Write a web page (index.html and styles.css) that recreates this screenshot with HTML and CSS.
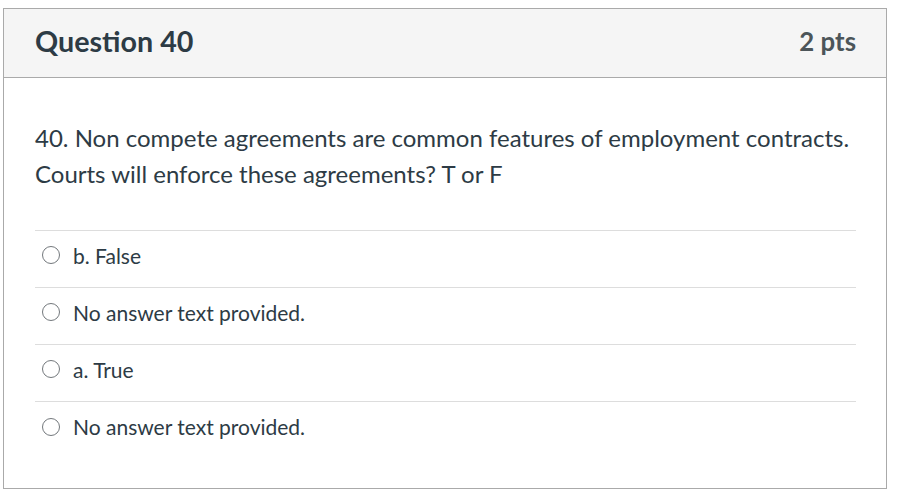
FILE: index.html
```html
<!DOCTYPE html>
<html>
<head>
<meta charset="utf-8">
<link rel="stylesheet" href="styles.css">
</head>
<body>
<div class="question">
  <div class="header">
    <span class="title">Question 40</span>
    <span class="pts">2 pts</span>
  </div>
  <div class="content">
    <p class="text">40. Non compete agreements are common features of employment contracts. Courts will enforce these agreements? T or F</p>
    <div class="answers">
      <div class="answer"><span class="radio"></span><span class="label">b. False</span></div>
      <div class="answer"><span class="radio"></span><span class="label">No answer text provided.</span></div>
      <div class="answer"><span class="radio"></span><span class="label">a. True</span></div>
      <div class="answer"><span class="radio"></span><span class="label">No answer text provided.</span></div>
    </div>
  </div>
</div>
</body>
</html>
```
FILE: styles.css
```css
html, body { margin: 0; padding: 0; background: #fff; }
body { font-family: Lato, "Noto Sans", sans-serif; color: #2d3b45; padding: 8px 0 0 3px; }
.question { width: 884px; height: 481px; border: 1px solid #aaaaaa; box-sizing: border-box; }
.header { height: 69px; background: #f5f5f5; border-bottom: 1px solid #aaaaaa; display: flex; align-items: center; justify-content: space-between; padding: 0 30px 4px 31px; box-sizing: border-box; }
.title { font-size: 28.7px; font-weight: 700; color: #2d3b45; }
.pts { font-size: 25.8px; font-weight: 700; color: #4c5559; }
.content { padding: 0 30px 0 31px; }
.text { margin: 42px 0 0 0; font-size: 24px; line-height: 36px; }
.answers { margin-top: 38px; border-top: 1px solid #dddddd; }
.answer { height: 57px; border-bottom: 1px solid #dddddd; display: flex; align-items: center; padding: 0 0 8px 7px; box-sizing: border-box; }
.answer:last-child { border-bottom: none; }
.radio { width: 18px; height: 18px; border: 1.4px solid #73787c; border-radius: 50%; box-sizing: border-box; margin-right: 13px; }
.label { font-size: 21px; }
```
